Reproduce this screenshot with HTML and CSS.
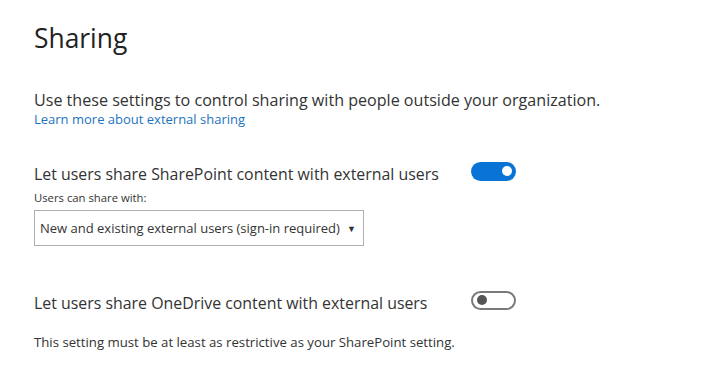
FILE: index.html
```html
<!DOCTYPE html>
<html>
<head>
<meta charset="utf-8">
<link rel="stylesheet" href="styles.css">
</head>
<body>
<div class="page">
	<h1 class="title">Sharing</h1>

	<p class="intro">Use these settings to control sharing with people outside your organization.</p>
	<a class="learn" href="#">Learn more about external sharing</a>

	<div class="setting sp">
		<div class="setting-row">
			<span class="setting-label">Let users share SharePoint content with external users</span>
			<span class="toggle on"><span class="knob"></span></span>
		</div>
		<div class="field-label">Users can share with:</div>
		<div class="select">
			<span class="select-text">New and existing external users (sign-in required)</span>
			<span class="caret">&#9660;</span>
		</div>
	</div>

	<div class="setting od">
		<div class="setting-row">
			<span class="setting-label">Let users share OneDrive content with external users</span>
			<span class="toggle off"><span class="knob"></span></span>
		</div>
		<p class="note">This setting must be at least as restrictive as your SharePoint setting.</p>
	</div>
</div>
</body>
</html>
```

FILE: styles.css
```css
body {margin:0;
	background:#fff;
	color:#333;
	font-family:"Open Sans", "Noto Sans", sans-serif;}
.page {padding:18px 0 0 34px;}
.title {margin:0;
	font-size:26.4px;
	font-weight:400;
	line-height:40px;
	color:#222;}
.intro {margin:32px 0 0 0;
	font-size:16.1px;
	line-height:20px;}
.learn {display:block;
	font-size:13px;
	line-height:18px;
	color:#1e73be;
	text-decoration:none;}
.setting {margin-top:34px;}
.setting-row {display:grid;
	grid-template-columns:421px 45px;
	column-gap:16px;
	align-items:center;}
.setting-label {font-size:15.9px;
	line-height:24px;
	white-space:nowrap;}
.toggle {display:flex;
	align-items:center;
	box-sizing:border-box;
	width:45px;
	height:19px;
	transform:translateY(-3px);
	border-radius:10px;
	padding:0 4px;}
.toggle .knob {width:10px;
	height:10px;
	border-radius:50%;}
.toggle.on {background:#0a74d6;
	justify-content:flex-end;}
.toggle.on .knob {background:#fff;}
.toggle.off {border:2px solid #7a7a7a;}
.toggle.off .knob {background:#555;}
.field-label {font-size:11.3px;
	line-height:16px;
	margin-top:4px;}
.select {display:flex;
	align-items:center;
	justify-content:space-between;
	box-sizing:border-box;
	width:330px;
	height:36px;
	margin-top:4px;
	padding:0 7px 0 5px;
	border:1px solid #b0b0b0;
	font-size:13px;
	white-space:nowrap;}
.caret {font-size:9px;
	color:#333;}
.od {margin-top:45px;}
.note {margin:18px 0 0 0;
	font-size:13.2px;
	line-height:18px;}
```
